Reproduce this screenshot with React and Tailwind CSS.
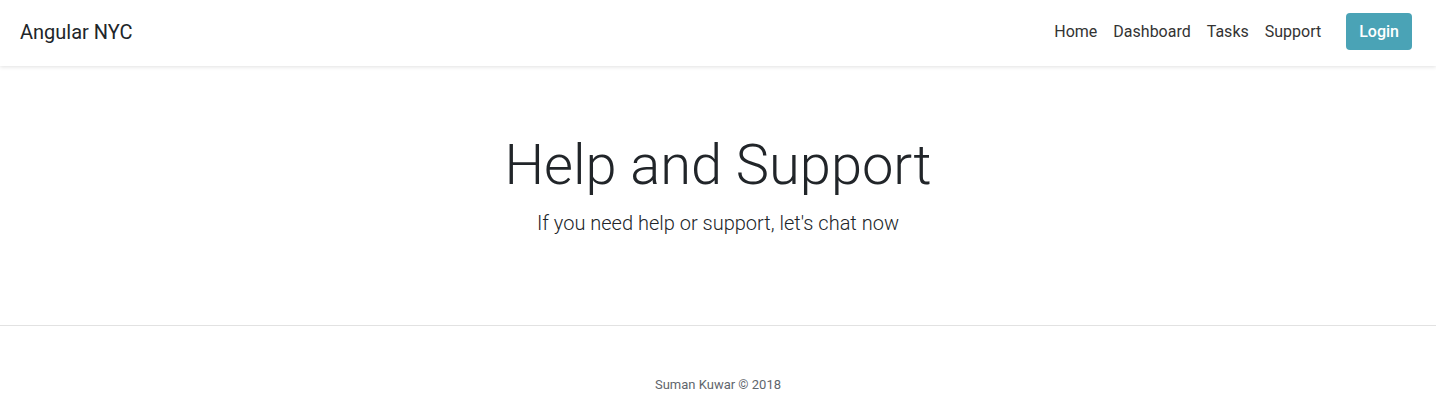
export default function App() {
  return (
    <div className="min-h-screen bg-white font-['Roboto',sans-serif] text-[#212529]">
      <nav className="flex h-[66px] items-center justify-between bg-white pb-[3px] pl-5 pr-6 shadow-[0_1px_4px_rgba(0,0,0,0.12)]">
        <a className="text-[20px] leading-none text-[#212529]">Angular NYC</a>
        <div className="flex items-center">
          <ul className="flex items-center gap-4 text-[16px] text-[#333]">
            <li>Home</li>
            <li>Dashboard</li>
            <li>Tasks</li>
            <li>Support</li>
          </ul>
          <button className="ml-[25px] h-[37px] rounded-[4px] bg-[#4aa3b6] px-[13px] text-[16px] font-medium text-white">
            Login
          </button>
        </div>
      </nav>

      <section className="px-4 pt-[66px] pb-[87px] text-center">
        <h1 className="mb-[9px] text-[56px] font-light leading-[1.2]">Help and Support</h1>
        <p className="text-[20px] font-light leading-[1.5]">If you need help or support, let's chat now</p>
      </section>

      <footer className="border-t border-[#e2e2e2] pt-[49px] pb-4 text-center text-[13px] text-[#5f666d]">
        Suman Kuwar © 2018
      </footer>
    </div>
  );
}
